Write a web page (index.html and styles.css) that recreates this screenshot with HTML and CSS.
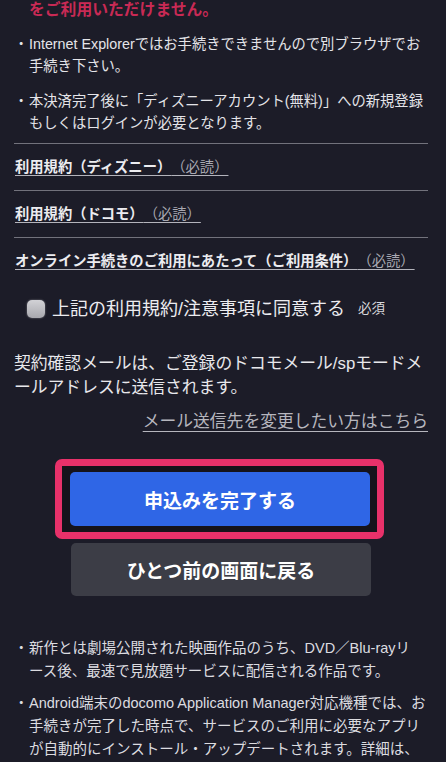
FILE: index.html
```html
<!DOCTYPE html>
<html lang="ja">
<head>
    <meta charset="UTF-8">
    <meta name="viewport" content="width=device-width, initial-scale=1.0">
    <title>お申込み内容の確認</title>
    <link rel="stylesheet" href="styles.css">
</head>
<body>
    <div class="page">
        <p class="warn">をご利用いただけません。</p>

        <ul class="notes">
            <li>Internet Explorerではお手続きできませんので別ブラウザでお<br>手続き下さい。</li>
            <li>本決済完了後に「ディズニーアカウント(無料)」への新規登録<br>もしくはログインが必要となります。</li>
        </ul>

        <ul class="terms">
            <li><a href="#"><b>利用規約（ディズニー）</b>（必読）</a></li>
            <li><a href="#"><b>利用規約（ドコモ）</b>（必読）</a></li>
            <li><a href="#"><b>オンライン手続きのご利用にあたって（ご利用条件）</b>（必読）</a></li>
        </ul>

        <label class="agree">
            <input type="checkbox" name="agree">
            <span class="agree-text">上記の利用規約/注意事項に同意する</span>
            <span class="required">必須</span>
        </label>

        <p class="mail-note">契約確認メールは、ご登録のドコモメール/spモードメ<br>ールアドレスに送信されます。</p>
        <p class="mail-change"><a href="#">メール送信先を変更したい方はこちら</a></p>

        <div class="actions">
            <div class="highlight">
                <button type="button" class="btn btn-primary">申込みを完了する</button>
            </div>
            <button type="button" class="btn btn-back">ひとつ前の画面に戻る</button>
        </div>

        <ul class="notes notes-lower">
            <li>新作とは劇場公開された映画作品のうち、DVD／Blu-rayリ<br>ース後、最速で見放題サービスに配信される作品です。</li>
            <li>Android端末のdocomo Application Manager対応機種では、お<br>手続きが完了した時点で、サービスのご利用に必要なアプリ<br>が自動的にインストール・アップデートされます。詳細は、<br>ドコモホームページ（契約中サービスの一括インストール）</li>
        </ul>
    </div>
</body>
</html>
```

FILE: styles.css
```css
body {
    margin: 0;
    background-color: #1c1c28;
    color: #e4e4e8;
    font-family: "Liberation Sans", "Noto Sans CJK JP", sans-serif;
    text-spacing-trim: space-all;
    overflow: hidden;
}
.page {
    padding: 0 18px 0 14px;
}
p {
    margin: 0;
}
a {
    color: inherit;
}
.warn {
    padding-left: 15px;
    font-size: 15.8px;
    line-height: 20px;
    font-weight: bold;
    color: #c92a55;
}

/* bullet notes */
.notes {
    list-style: none;
    margin: 13px 0 0;
    padding: 0;
}
.notes li {
    position: relative;
    padding-left: 15px;
    margin-bottom: 13px;
    font-size: 14.3px;
    line-height: 22px;
    white-space: nowrap;
}
.notes li::before {
    content: "・";
    position: absolute;
    left: 0;
    top: 0;
    width: 15px;
    text-align: left;
}
.notes-lower {
    margin-top: 41px;
}
.notes-lower li {
    font-size: 14.5px;
    line-height: 23px;
    margin-bottom: 9px;
    color: #dcdce0;
}

/* terms links */
.terms {
    list-style: none;
    margin: -4px 0 0;
    padding: 0;
}
.terms li {
    border-top: 1px solid #72727c;
    padding: 12px 0 12px 1px;
    font-size: 14.3px;
    line-height: 22px;
}
.terms a {
    color: #a9a9b2;
    text-decoration: underline;
    text-decoration-color: #b4b4bc;
    text-underline-offset: 3px;
}
.terms b {
    color: #ececf0;
}

/* agreement checkbox */
.agree {
    display: flex;
    align-items: center;
    margin-top: 12px;
    padding-left: 13px;
    line-height: 26px;
}
.agree input {
    appearance: none;
    -webkit-appearance: none;
    width: 18px;
    height: 18px;
    margin: 0 7px 0 0;
    border-radius: 5px;
    background: linear-gradient(#d2d2d6, #a8a8ae);
    box-shadow: 0 0 2px rgba(200, 200, 205, 0.6);
}
.agree-text {
    font-size: 18px;
    color: #ececf0;
}
.required {
    margin-left: 13px;
    font-size: 13.5px;
    color: #d8d8dc;
}

/* mail notes */
.mail-note {
    margin-top: 30px;
    font-size: 16.8px;
    line-height: 23.5px;
    color: #e8e8ec;
}
.mail-change {
    margin-top: 11px;
    text-align: right;
    font-size: 16.8px;
    line-height: 24px;
}
.mail-change a {
    color: #b6b6be;
    text-underline-offset: 4px;
}

/* buttons */
.actions {
    display: flex;
    flex-direction: column;
    align-items: center;
    margin-top: 25px;
}
.highlight {
    width: 300px;
    padding: 6px 7px 6px 8px;
    border: 7px solid #e8316a;
    border-radius: 7px;
    background-color: #15131b;
    margin-left: -3px;
}
.btn {
    display: block;
    width: 300px;
    border: none;
    border-radius: 5px;
    color: #fff;
    font-family: inherit;
    font-weight: bold;
    font-size: 19px;
    cursor: pointer;
}
.btn-primary {
    height: 54px;
    background-color: #2f66e6;
}
.btn-back {
    height: 53px;
    margin-top: 4px;
    background-color: #3c3d46;
}
```
